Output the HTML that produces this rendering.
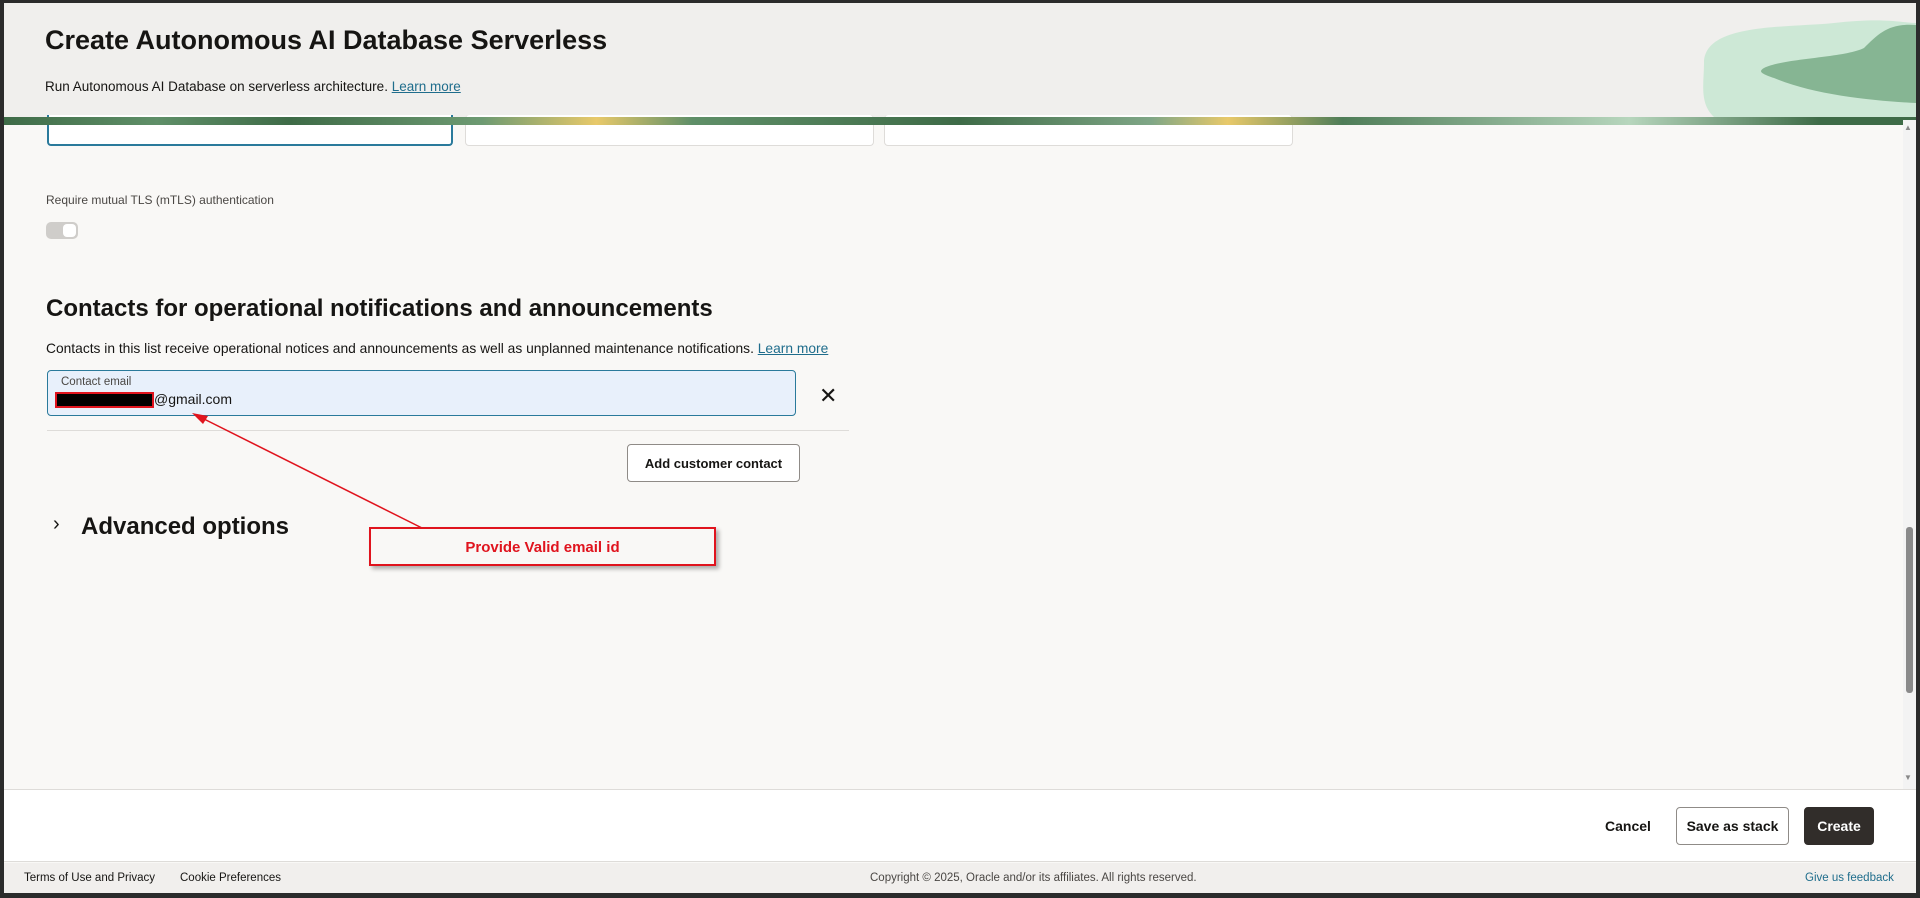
<!DOCTYPE html>
<html><head><meta charset="utf-8"><style>
*{box-sizing:border-box;margin:0;padding:0}
body{width:1920px;height:898px;background:#2b2b2b;font-family:"Liberation Sans",sans-serif;color:#161513;position:relative;overflow:hidden}
#app{position:absolute;left:4px;top:3px;width:1912px;height:890px;background:#f9f8f6;overflow:hidden}
.abs{position:absolute}
.hdr{left:0;top:0;width:1912px;height:114px;background:#f0efed}
.band{left:0;top:114px;width:1912px;height:8px;background:linear-gradient(90deg,#3e6b47 0,#5f8f68 8%,#3e6b47 15%,#6d9a72 25%,#e8c96a 31%,#5f8f68 36%,#3e6b47 50%,#7fa686 60%,#e8c96a 64%,#4f7d58 70%,#b7d6bd 85%,#3e6b47 95%)}
.inp{background:#fff;border:1px solid #dedcd9;border-radius:4px}
.t{white-space:nowrap}
.btn{border:1px solid #8f8b87;border-radius:4px;background:#fff;font-weight:bold;font-size:14px;display:flex;align-items:center;justify-content:center}
</style></head><body>
<div id="app">
<div class="abs hdr"></div>
<svg class="abs" style="left:1690px;top:0" width="222" height="114" viewBox="0 0 222 114">
<path d="M10 60 C10 20 90 25 140 20 C190 14 210 20 222 20 L222 114 L20 114 C5 100 10 80 10 60Z" fill="#cde8d6"/>
<path d="M70 65 C90 55 150 55 170 45 C185 30 195 20 222 22 L222 100 C180 98 120 92 80 75 C65 70 65 68 70 65Z" fill="#86b593"/>
</svg>
<div class="abs t" style="left:41px;top:22px;font-size:27px;font-weight:bold">Create Autonomous AI Database Serverless</div>
<div class="abs t" style="left:41px;top:76px;font-size:13.5px">Run Autonomous AI Database on serverless architecture. <span style="color:#1f6d8c;text-decoration:underline">Learn more</span></div>

<div class="abs inp" style="left:43px;top:112px;width:406px;height:31px;border:2px solid #2a7a9b;border-top:none;border-radius:0 0 4px 4px"></div>
<div class="abs inp" style="left:461px;top:112px;width:409px;height:31px;border-top:none"></div>
<div class="abs inp" style="left:880px;top:112px;width:409px;height:31px;border-top:none"></div>
<div class="abs band" style="top:114px"></div>

<div class="abs t" style="left:42px;top:190px;font-size:12px;color:#4a4744">Require mutual TLS (mTLS) authentication</div>
<div class="abs" style="left:42px;top:219px;width:32px;height:17px;border-radius:5px;background:#cfcdca"><div style="position:absolute;right:2px;top:2px;width:13px;height:13px;border-radius:4px;background:#fff"></div></div>

<div class="abs t" style="left:42px;top:292px;font-size:24px;font-weight:bold">Contacts for operational notifications and announcements</div>
<div class="abs t" style="left:42px;top:338px;font-size:13.8px">Contacts in this list receive operational notices and announcements as well as unplanned maintenance notifications. <span style="color:#1f6d8c;text-decoration:underline">Learn more</span></div>

<div class="abs" style="left:43px;top:367px;width:749px;height:46px;background:#e8f0fb;border:1px solid #2a7a9b;border-radius:4px"></div>
<div class="abs t" style="left:57px;top:373px;font-size:11.5px;color:#4a4744">Contact email</div>
<div class="abs" style="left:51px;top:389px;width:99px;height:16px;background:#000;border:2px solid #e0141e"></div>
<div class="abs t" style="left:150px;top:388px;font-size:14px">@gmail.com</div>
<div class="abs t" style="left:815px;top:380px;font-size:22px">✕</div>
<div class="abs" style="left:43px;top:427px;width:802px;height:1px;background:#dedcd9"></div>
<div class="abs btn" style="left:623px;top:441px;width:173px;height:38px;font-size:13px">Add customer contact</div>

<div class="abs t" style="left:49px;top:510px;font-size:20px">›</div>
<div class="abs t" style="left:77px;top:510px;font-size:24px;font-weight:bold">Advanced options</div>

<svg class="abs" style="left:0;top:0" width="1912" height="890">
<line x1="422" y1="527" x2="192" y2="412" stroke="#e0141e" stroke-width="1.5"/>
<polygon points="188,410 204,413 199,421" fill="#e0141e"/>
</svg>
<div class="abs" style="left:365px;top:524px;width:347px;height:39px;border:2px solid #e0141e;background:#f9f8f6;box-shadow:3px 3px 4px rgba(0,0,0,.3)"></div>
<div class="abs t" style="left:365px;top:536px;width:347px;text-align:center;font-size:15px;font-weight:bold;color:#e0141e">Provide Valid email id</div>

<div class="abs" style="left:1899px;top:117px;width:13px;height:670px;background:#f3f3f3"></div>
<div class="abs" style="left:1902px;top:524px;width:7px;height:166px;background:#8a8a8a;border-radius:3px"></div>
<div class="abs t" style="left:1900px;top:120px;font-size:8px;color:#888">▲</div>
<div class="abs t" style="left:1900px;top:770px;font-size:8px;color:#888">▼</div>

<div class="abs" style="left:0;top:786px;width:1912px;height:73px;background:#fff;border-top:1px solid #dedcd9;border-bottom:1px solid #dedcd9"></div>
<div class="abs t" style="left:1601px;top:815px;font-size:14px;font-weight:bold">Cancel</div>
<div class="abs btn" style="left:1672px;top:804px;width:113px;height:38px">Save as stack</div>
<div class="abs btn" style="left:1800px;top:804px;width:70px;height:38px;background:#312d2a;color:#fff;border-color:#312d2a">Create</div>

<div class="abs" style="left:0;top:860px;width:1912px;height:30px;background:#f1efed"></div>
<div class="abs t" style="left:20px;top:869px;font-size:11.5px">Terms of Use and Privacy</div>
<div class="abs t" style="left:176px;top:869px;font-size:11.5px">Cookie Preferences</div>
<div class="abs t" style="left:866px;top:869px;font-size:11.5px;color:#4a4744">Copyright © 2025, Oracle and/or its affiliates. All rights reserved.</div>
<div class="abs t" style="left:1801px;top:869px;font-size:11.5px;color:#1f6d8c">Give us feedback</div>
</div>
</body></html>
